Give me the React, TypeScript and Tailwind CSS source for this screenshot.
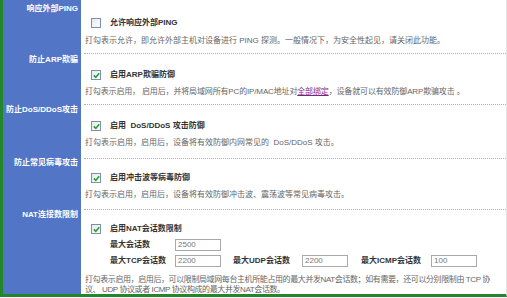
const FONT = { fontFamily: '"Liberation Sans", "Noto Sans CJK SC", sans-serif' };

function Box({ checked }: { checked: boolean }) {
  return (
    <span className="flex h-[10px] w-[10px] shrink-0 items-center justify-center border border-[#7d8fae] bg-gradient-to-br from-[#e6e9ee] to-white">
      {checked && (
        <svg width="7" height="7" viewBox="0 0 7 7">
          <path d="M0.8 3.4 L2.8 5.4 L6.2 1.2" fill="none" stroke="#22a02a" strokeWidth="1.6" />
        </svg>
      )}
    </span>
  );
}

function Title({ checked, text }: { checked: boolean; text: string }) {
  return (
    <div className="flex h-[10px] items-center gap-[9px] pl-[7px]">
      <Box checked={checked} />
      <span className="text-[8px] font-bold leading-[10px] text-[#333] whitespace-pre">{text}</span>
    </div>
  );
}

function Label({ text, pt }: { text: string; pt: string }) {
  return (
    <div className={`bg-[#5275c6] pr-[3px] text-right text-[8px] font-bold leading-[10px] text-white ${pt}`}>
      {text}
    </div>
  );
}

function NumInput({ value }: { value: string }) {
  return (
    <div className="flex h-[12px] w-[46px] items-center border border-[#a9a9a9] bg-white pl-[2px] text-[8px] text-[#777]">
      {value}
    </div>
  );
}

function Desc({ children }: { children: React.ReactNode }) {
  return <div className="pl-[1px] text-[8px] leading-[10px] text-[#666] whitespace-pre">{children}</div>;
}

export default function App() {
  return (
    <div style={FONT} className="h-[298px] w-[507px] bg-white">
      <div className="grid h-[297px] grid-cols-[78px_1fr] grid-rows-[53px_51px_54px_51px_85px] border-b-[3px] border-l-[3px] border-r border-b-[#23862b] border-l-[#23862b] border-r-[#e4e4e4]">
        <Label text="响应外部PING" pt="pt-[4px]" />
        <div className="pl-[3px]">
          <div className="h-full border-t border-transparent pt-[17px]">
            <Title checked={false} text="允许响应外部PING" />
            <div className="mt-[8px]">
              <Desc>打勾表示允许，即允许外部主机对设备进行 PING 探测。一般情况下，为安全性起见，请关闭此功能。</Desc>
            </div>
          </div>
        </div>

        <Label text="防止ARP欺骗" pt="pt-[2px]" />
        <div className="pl-[3px]">
          <div className="h-full border-t border-dotted border-[#9fb3d6] pt-[16px]">
            <Title checked text="启用ARP欺骗防御" />
            <div className="mt-[7px] tracking-[-0.15px]">
              <Desc>
                打勾表示启用， 启用后，并将局域网所有PC的IP/MAC地址对
                <span className="text-[#7f1f8a] underline">全部绑定</span>
                ，设备就可以有效防御ARP欺骗攻击 。
              </Desc>
            </div>
          </div>
        </div>

        <Label text="防止DoS/DDoS攻击" pt="pt-[1px]" />
        <div className="pl-[3px]">
          <div className="h-full border-t border-dotted border-[#9fb3d6] pt-[16px]">
            <Title checked text="启用  DoS/DDoS 攻击防御" />
            <div className="mt-[7px]">
              <Desc>打勾表示启用，启用后，设备将有效防御内网常见的  DoS/DDoS 攻击。</Desc>
            </div>
          </div>
        </div>

        <Label text="防止常见病毒攻击" pt="pt-[0px]" />
        <div className="pl-[3px]">
          <div className="h-full border-t border-dotted border-[#9fb3d6] pt-[14px]">
            <Title checked text="启用冲击波等病毒防御" />
            <div className="mt-[7px]">
              <Desc>打勾表示启用，启用后，设备将有效防御冲击波、震荡波等常见病毒攻击。</Desc>
            </div>
          </div>
        </div>

        <Label text="NAT连接数限制" pt="pt-[1px]" />
        <div className="pl-[3px]">
          <div className="h-full border-t border-dotted border-[#9fb3d6] pt-[14px]">
            <Title checked text="启用NAT会话数限制" />
            <div className="mt-[5px] flex items-center pl-[26px]">
              <span className="w-[65px] text-[8px] font-bold text-[#333]">最大会话数</span>
              <NumInput value="2500" />
            </div>
            <div className="mt-[4px] flex items-center pl-[26px]">
              <span className="w-[65px] text-[8px] font-bold text-[#333]">最大TCP会话数</span>
              <NumInput value="2200" />
              <span className="ml-[12px] w-[69px] text-[8px] font-bold text-[#333]">最大UDP会话数</span>
              <NumInput value="2200" />
              <span className="ml-[13px] w-[70px] text-[8px] font-bold text-[#333]">最大ICMP会话数</span>
              <NumInput value="100" />
            </div>
            <div className="mt-[8px] tracking-[-0.4px]">
              <Desc>
                打勾表示启用，启用后，可以限制局域网每台主机所能占用的最大并发NAT会话数；如有需要，还可以分别限制由 TCP 协
                {'\n'}议、 UDP 协议或者 ICMP 协议构成的最大并发NAT会话数。
              </Desc>
            </div>
          </div>
        </div>
      </div>
    </div>
  );
}
